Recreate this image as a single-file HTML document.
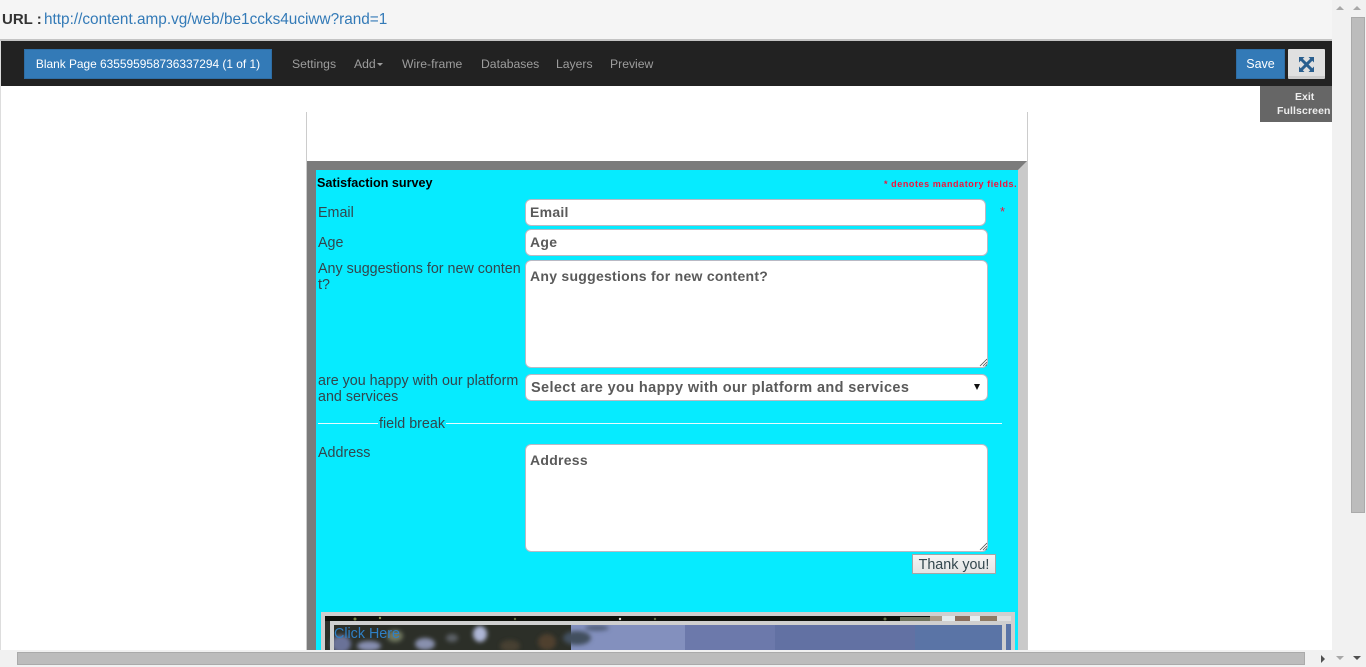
<!DOCTYPE html>
<html><head><meta charset="utf-8"><style>
html,body{margin:0;padding:0;width:1366px;height:667px;overflow:hidden;background:#fff;font-family:"Liberation Sans",sans-serif}
div,span,svg{position:absolute;white-space:nowrap;box-sizing:border-box}
.n{top:56px;font-size:12.2px;line-height:16px;color:#9d9d9d}
.l{left:318px;font-size:14.3px;line-height:16px;color:#33464d}
.f{background:#fff;border:1px solid #b9b9c4;border-radius:6px;color:#5a5a5a;font-weight:bold;font-size:14px;letter-spacing:.27px;line-height:16px;padding-left:4px}
</style></head><body>
<div style="left:0;top:0;width:1332px;height:39px;background:#f5f5f5"></div>
<div style="left:0;top:39px;width:1332px;height:2px;background:#c4c4c4"></div>
<div style="left:2px;top:11px;font-size:15px;line-height:18px;font-weight:bold;color:#333">URL :</div>
<div style="left:44px;top:11px;font-size:15.350px;line-height:18px;color:#337ab7">http://content.amp.vg/web/be1ccks4uciww?rand=1</div>

<div style="left:0;top:41px;width:1px;height:626px;background:#ddd"></div>
<div style="left:1px;top:41px;width:1331px;height:45px;background:#222"></div>
<div style="left:24px;top:49px;width:248px;height:30px;background:#337ab7;border:1px solid #2e6da4;color:#fff;font-size:11.900px;line-height:28px;text-align:center">Blank Page 635595958736337294 (1 of 1)</div>
<div class="n" style="left:292px">Settings</div>
<div class="n" style="left:354px">Add</div>
<div style="left:377px;top:63px;width:0;height:0;border-left:3px solid transparent;border-right:3px solid transparent;border-top:3px solid #9d9d9d"></div>
<div class="n" style="left:402px">Wire-frame</div>
<div class="n" style="left:481px">Databases</div>
<div class="n" style="left:556px">Layers</div>
<div class="n" style="left:610px">Preview</div>
<div style="left:1236px;top:49px;width:49px;height:30px;background:#337ab7;border:1px solid #2e6da4;color:#fff;font-size:12.500px;line-height:28px;text-align:center">Save</div>
<div style="left:1288px;top:49px;width:37px;height:30px;background:#e0e0e0;border-bottom:3px solid #ccc;border-radius:1px"></div>
<svg style="left:1299px;top:57px" width="15" height="15" viewBox="0 0 15 15"><path d="M0 0H5.500L3.800 1.700 7.500 5.400 11.200 1.700 9.500 0H15V5.500L13.300 3.800 9.600 7.500 13.300 11.200 15 9.500V15H9.500L11.200 13.300 7.500 9.600 3.800 13.300 5.500 15H0V9.500L1.700 11.200 5.400 7.500 1.700 3.800 0 5.500Z" fill="#2a5f8f"/></svg>
<div style="left:1260px;top:86px;width:72px;height:36px;background:#666"></div>
<div style="left:1302px;top:83px;width:0;height:0;border-left:3px solid transparent;border-right:3px solid transparent;border-bottom:3px solid #222"></div>
<div style="left:1295px;top:90px;font-size:10.500px;line-height:14px;font-weight:bold;color:#eee">Exit</div>
<div style="left:1277px;top:104px;font-size:10.500px;line-height:14px;font-weight:bold;color:#eee;letter-spacing:.1px">Fullscreen</div>

<div style="left:306px;top:112px;width:1px;height:540px;background:#ccc"></div>
<div style="left:1027px;top:112px;width:1px;height:540px;background:#ccc"></div>
<div style="left:307px;top:161px;width:720px;height:491px;background:#7b7b7b"></div>
<div style="left:1018px;top:170px;width:9px;height:482px;background:#c9c9c9"></div>
<svg style="left:1018px;top:161px" width="9" height="9"><path d="M0 9L9 0V9Z" fill="#c9c9c9"/></svg>
<div style="left:316px;top:170px;width:702px;height:482px;background:#06ebff"></div>

<div style="left:317px;top:175px;font-size:12.600px;line-height:16px;font-weight:bold;color:#000">Satisfaction survey</div>
<div style="left:884px;top:178px;font-size:9px;line-height:12px;font-weight:bold;letter-spacing:.58px;color:#f0143c">* denotes mandatory fields.</div>
<div style="left:1000px;top:205px;font-size:13px;line-height:14px;color:#f0143c">*</div>

<div class="l" style="top:205px">Email</div>
<div class="f" style="left:525px;top:199px;width:461px;height:27px;line-height:25px">Email</div>
<div class="l" style="top:235px">Age</div>
<div class="f" style="left:525px;top:229px;width:463px;height:27px;line-height:25px">Age</div>
<div class="l" style="top:261px">Any suggestions for new conten<br>t?</div>
<div class="f" style="left:525px;top:260px;width:463px;height:108px;padding-top:7px">Any suggestions for new content?</div>
<svg style="left:979px;top:358px" width="8" height="9"><path d="M1 8L8 1M4 8L8 4M6.500 8L8 6.500" stroke="#555" stroke-width=".8"/></svg>
<div class="l" style="top:373px">are you happy with our platform<br>and services</div>
<div class="f" style="left:525px;top:374px;width:463px;height:27px;line-height:26px;padding-left:5px;font-size:14.500px;letter-spacing:.37px">Select are you happy with our platform and services</div>
<div style="left:974px;top:384px;width:0;height:0;border-left:3.500px solid transparent;border-right:3.500px solid transparent;border-top:6px solid #111"></div>
<div style="left:318px;top:423px;width:684px;height:1px;background:#e6fbff"></div>
<div style="left:378px;top:416px;padding:0 1px;background:#06ebff;font-size:14.300px;line-height:16px;height:15px;color:#33464d">field break</div>
<div class="l" style="top:445px">Address</div>
<div class="f" style="left:525px;top:444px;width:463px;height:108px;padding-top:7px">Address</div>
<svg style="left:979px;top:542px" width="8" height="9"><path d="M1 8L8 1M4 8L8 4M6.500 8L8 6.500" stroke="#555" stroke-width=".8"/></svg>
<div style="left:912px;top:554px;width:84px;height:20px;background:linear-gradient(#f4f4f4,#e4e4e4);border:1px solid #a5a5a5;font-size:14.300px;line-height:20px;text-align:center;color:#33464d">Thank you!</div>

<div style="left:321px;top:612px;width:694px;height:40px;background:#cfcfcf"></div>
<div style="left:325px;top:616px;width:686px;height:36px;overflow:hidden;background:#0b0d08">
  <svg style="left:0;top:0" width="686" height="36" viewBox="0 0 686 36">
    <defs><filter id="b" x="-20%" y="-20%" width="140%" height="140%"><feGaussianBlur stdDeviation="2"/></filter></defs>
    <rect x="0" y="5" width="686" height="31" fill="#6271a3"/>
    <rect x="230" y="5" width="130" height="31" fill="#8390be"/>
    <rect x="360" y="5" width="90" height="31" fill="#6c79ab"/>
    <rect x="590" y="9" width="96" height="27" fill="#5a74a6"/>
    <rect x="0" y="5" width="246" height="31" fill="#2c2f28"/>
    <g filter="url(#b)">
      <ellipse cx="16" cy="28" rx="10" ry="9" fill="#6a7298"/>
      <ellipse cx="44" cy="30" rx="12" ry="5" fill="#868eb0"/>
      <ellipse cx="70" cy="20" rx="8" ry="6" fill="#70775f"/>
      <ellipse cx="100" cy="28" rx="10" ry="6" fill="#8890ad"/>
      <ellipse cx="155" cy="18" rx="7" ry="8" fill="#aeb6d6"/>
      <ellipse cx="127" cy="22" rx="6" ry="4" fill="#5c6066"/>
      <ellipse cx="185" cy="30" rx="10" ry="6" fill="#463f30"/>
      <ellipse cx="222" cy="26" rx="9" ry="8" fill="#50402e"/>
      <ellipse cx="252" cy="22" rx="14" ry="7" fill="#434f5e"/>
      <ellipse cx="272" cy="12" rx="12" ry="3" fill="#53607c"/>
    </g>
    <rect x="0" y="0" width="686" height="5" fill="#0e100a"/>
    <circle cx="30" cy="3" r="1.500" fill="#6f7c3a"/><circle cx="55" cy="2" r="1.200" fill="#8b9450"/>
    <circle cx="190" cy="3" r="1.200" fill="#5f6a36"/><circle cx="295" cy="3" r="1.200" fill="#e2e2dc"/>
    <circle cx="330" cy="3" r="1.200" fill="#5d683a"/><circle cx="560" cy="3" r="1.500" fill="#5e6a40"/>
    <rect x="575" y="1" width="30" height="4" fill="#6d725c"/>
    <rect x="605" y="0" width="12" height="5" fill="#a89a86"/>
    <rect x="617" y="0" width="13" height="5" fill="#e4ecee"/>
    <rect x="630" y="0" width="15" height="5" fill="#8b6f5e"/>
    <rect x="645" y="0" width="10" height="5" fill="#e8eef0"/>
    <rect x="655" y="0" width="17" height="5" fill="#8e7a64"/>
    <rect x="672" y="0" width="14" height="5" fill="#e0e0e0"/>
  </svg>
</div>
<div style="left:330px;top:621px;width:676px;height:31px;border:4px solid #cfcfcf;border-bottom:0"></div>
<div style="left:1006px;top:621px;width:5px;height:31px;background:#5a74a6;border-top:3px solid #cfcfcf"></div>
<div style="left:334px;top:626px;font-size:14.300px;line-height:17px;color:#2f7fc4">Click Here</div>

<div style="left:1332px;top:0;width:34px;height:667px;background:#f1f1f1"></div>
<div style="left:1336px;top:6px;width:0;height:0;border-left:4px solid transparent;border-right:4px solid transparent;border-bottom:4px solid #a8a8a8"></div>
<div style="left:1353px;top:6px;width:0;height:0;border-left:4px solid transparent;border-right:4px solid transparent;border-bottom:4px solid #a8a8a8"></div>
<div style="left:1351px;top:17px;width:14px;height:496px;background:#bcbcbc;border:1px solid #aaa"></div>
<div style="left:0;top:650px;width:1332px;height:17px;background:#f1f1f1"></div>
<div style="left:17px;top:652px;width:1288px;height:13px;background:#bcbcbc;border:1px solid #aaa"></div>
<div style="left:1321px;top:655px;width:0;height:0;border-top:4px solid transparent;border-bottom:4px solid transparent;border-left:4px solid #505050"></div>
<div style="left:1336px;top:656px;width:0;height:0;border-left:4px solid transparent;border-right:4px solid transparent;border-top:4px solid #a8a8a8"></div>
<div style="left:1353px;top:656px;width:0;height:0;border-left:4px solid transparent;border-right:4px solid transparent;border-top:4px solid #505050"></div>
</body></html>
